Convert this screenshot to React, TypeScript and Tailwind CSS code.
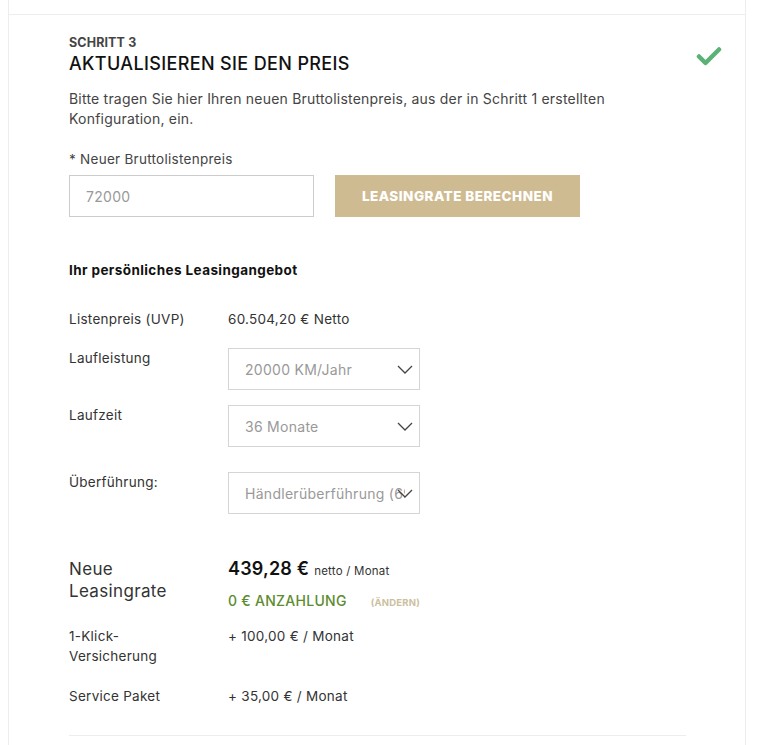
const font = { fontFamily: 'Inter, "Noto Sans", sans-serif' };

function Row({ label, children, className = '' }: { label: React.ReactNode; children: React.ReactNode; className?: string }) {
  return (
    <div className={`flex ${className}`}>
      <div className="w-[159px] shrink-0 text-[13.5px] leading-[20px] tracking-[0.02em] text-[#333]">{label}</div>
      <div className="flex-1">{children}</div>
    </div>
  );
}

function Value({ children }: { children: React.ReactNode }) {
  return <div className="text-[13.5px] leading-[20px] tracking-[0.02em] text-[#333]">{children}</div>;
}

function Select({ value }: { value: string }) {
  return (
    <div className="relative flex h-[42px] w-[192px] items-center border border-[#d5d5d5] pl-[16px]">
      <div className="w-[160px] overflow-hidden whitespace-nowrap text-[14px] tracking-[0.02em] text-[#999]">{value}</div>
      <svg className="absolute right-[6px] top-[16px] h-[9px] w-[16px]" viewBox="0 0 16 9">
        <path d="M1 1l7 7 7-7" fill="none" stroke="#444" strokeWidth="1.3" />
      </svg>
    </div>
  );
}

export default function App() {
  return (
    <div className="min-h-[745px] bg-white" style={font}>
      <div className="mx-[8px] h-[745px] w-[738px] border-x border-[#ededed]">
        <div className="h-[15px] border-b border-[#ededed]" />
        <div className="relative px-[60px] pt-[21px]">
          <svg className="absolute right-[23px] top-[31px] h-[20px] w-[26px]" viewBox="0 0 26 20">
            <path d="M3 10.5l6.5 6.5L23 3.5" fill="none" stroke="#5cb176" strokeWidth="4.5" strokeLinecap="round" strokeLinejoin="round" />
          </svg>
          <div className="text-[12.5px] font-bold leading-[14px] tracking-[0.01em] text-[#444]">SCHRITT 3</div>
          <h1 className="mt-[3px] text-[18px] font-medium leading-[22px] tracking-[0.02em] text-[#111]">AKTUALISIEREN SIE DEN PREIS</h1>
          <p className="mt-[14px] text-[14px] leading-[20px] tracking-[0.015em] text-[#444]">
            Bitte tragen Sie hier Ihren neuen Bruttolistenpreis, aus der in Schritt 1 erstellten
            <br />
            Konfiguration, ein.
          </p>

          <div className="mt-[21px] text-[13.5px] leading-[18px] tracking-[0.02em] text-[#444]">* Neuer Bruttolistenpreis</div>
          <div className="mt-[7px] flex gap-[21px]">
            <div className="flex h-[42px] w-[245px] items-center border border-[#ccc] px-[16px] text-[14px] tracking-[0.02em] text-[#999]">72000</div>
            <button className="h-[42px] w-[245px] bg-[#cfbb92] text-[13.5px] font-extrabold tracking-[0.035em] text-white">LEASINGRATE BERECHNEN</button>
          </div>

          <div className="mt-[44px] text-[13.5px] font-bold leading-[18px] tracking-[0.03em] text-[#111]">Ihr persönliches Leasingangebot</div>

          <Row label="Listenpreis (UVP)" className="mt-[30px]">
            <Value>60.504,20 € Netto</Value>
          </Row>
          <Row label="Laufleistung" className="mt-[19px]">
            <Select value="20000 KM/Jahr" />
          </Row>
          <Row label="Laufzeit" className="mt-[15px]">
            <Select value="36 Monate" />
          </Row>
          <Row label="Überführung:" className="mt-[25px]">
            <Select value="Händlerüberführung (690,00 €)" />
          </Row>

          <Row
            className="mt-[44px]"
            label={<div className="text-[17px] leading-[22px] tracking-[0.02em] text-[#333]">Neue<br />Leasingrate</div>}
          >
            <div className="flex items-baseline gap-[5px] leading-[22px]">
              <span className="text-[18px] font-semibold tracking-[0.01em] text-[#111]">439,28 €</span>
              <span className="text-[11.5px] tracking-[0.02em] text-[#333]">netto / Monat</span>
            </div>
            <div className="mt-[10px] flex items-baseline leading-[18px]">
              <span className="text-[14px] font-medium tracking-[0.02em] text-[#5d8c2f]">0 € ANZAHLUNG</span>
              <span className="ml-[24px] text-[9.5px] font-bold tracking-[0.02em] text-[#cbbf9f]">(ÄNDERN)</span>
            </div>
          </Row>
          <Row label={<>1-Klick-<br />Versicherung</>} className="mt-[14px]">
            <Value>+ 100,00 € / Monat</Value>
          </Row>
          <Row label="Service Paket" className="mt-[20px]">
            <Value>+ 35,00 € / Monat</Value>
          </Row>
          <div className="mt-[29px] w-[617px] border-b border-[#ededed]" />
        </div>
      </div>
    </div>
  );
}
